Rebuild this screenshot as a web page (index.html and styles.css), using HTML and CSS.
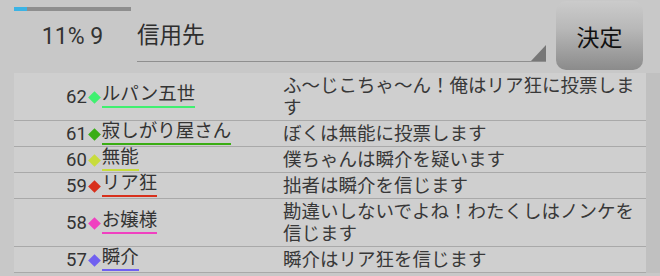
FILE: index.html
```html
<!DOCTYPE html>
<html lang="ja">
<head>
    <meta charset="UTF-8">
    <meta name="viewport" content="width=device-width, initial-scale=1.0">
    <title>投票</title>
    <link rel="stylesheet" href="styles.css">
</head>
<body>
    <div class="top">
        <div class="status">
            <div class="progress"><div class="progress-fill"></div></div>
            <div class="count">11% 9</div>
        </div>
        <div class="picker">信用先</div>
        <div class="decide">決定</div>
    </div>
    <div class="list">
        <div class="rows">
            <div class="row">
                <div class="who"><span class="num">62</span><span class="mark c62"></span><span class="name c62">ルパン五世</span></div>
                <div class="msg">ふ～じこちゃ～ん！俺はリア狂に投票します</div>
            </div>
            <div class="row">
                <div class="who"><span class="num">61</span><span class="mark c61"></span><span class="name c61">寂しがり屋さん</span></div>
                <div class="msg">ぼくは無能に投票します</div>
            </div>
            <div class="row">
                <div class="who"><span class="num">60</span><span class="mark c60"></span><span class="name c60">無能</span></div>
                <div class="msg">僕ちゃんは瞬介を疑います</div>
            </div>
            <div class="row">
                <div class="who"><span class="num">59</span><span class="mark c59"></span><span class="name c59">リア狂</span></div>
                <div class="msg">拙者は瞬介を信じます</div>
            </div>
            <div class="row">
                <div class="who"><span class="num">58</span><span class="mark c58"></span><span class="name c58">お嬢様</span></div>
                <div class="msg">勘違いしないでよね！わたくしはノンケを信じます</div>
            </div>
            <div class="row">
                <div class="who"><span class="num">57</span><span class="mark c57"></span><span class="name c57">瞬介</span></div>
                <div class="msg">瞬介はリア狂を信じます</div>
            </div>
        </div>
        <div class="track"></div>
    </div>
</body>
</html>
```

FILE: styles.css
```css
body {
    margin: 0;
    background-color: #c8c8c8;
    font-family: Roboto, "Noto Sans CJK JP", sans-serif;
    color: #333;
}
.top {
    display: flex;
    height: 73px;
}
.status {
    width: 117px;
    margin-left: 14px;
}
.progress {
    margin-top: 7px;
    height: 4px;
    background-color: #8e8e8e;
}
.progress-fill {
    width: 13px;
    height: 100%;
    background-color: #3bb3e4;
}
.count {
    margin-top: 12px;
    font-size: 23px;
    line-height: 27px;
    text-align: center;
}
.picker {
    display: flex;
    align-items: center;
    margin-left: 6px;
    width: 409px;
    height: 57px;
    padding-top: 4px;
    border-bottom: 1px solid #8f8f8f;
    font-size: 22.5px;
    color: #2e2e2e;
}
.picker::after {
    content: "";
    margin-left: auto;
    align-self: flex-end;
    width: 15px;
    height: 16px;
    background-color: #777;
    clip-path: polygon(100% 0, 100% 100%, 0 100%);
}
.decide {
    display: flex;
    align-items: center;
    justify-content: center;
    margin: 1px 0 0 10px;
    width: 87px;
    height: 69px;
    border-radius: 10px;
    background: linear-gradient(#cbcbcb, #b8b8b8 40%, #8b8b8b);
    font-size: 23px;
    color: #111;
}
.list {
    display: flex;
}
.rows {
    margin-left: 14px;
    width: 632px;
    background-color: #cfcfcf;
}
.track {
    flex: 1;
    background-color: #c0c0c0;
}
.row {
    display: grid;
    grid-template-columns: 269px 1fr;
    padding: 2px 0 1px;
    border-bottom: 1px solid #a9a9a9;
    font-size: 18.5px;
    line-height: 22px;
}
.who {
    display: flex;
    align-items: center;
    padding-left: 52px;
}
.num {
    font-size: 18.5px;
}
.mark {
    width: 9px;
    height: 9px;
    margin: 0 3px 0 3px;
    transform: rotate(45deg);
    background-color: currentColor;
}
.name {
    line-height: 17px;
    padding-bottom: 3px;
    border-bottom: 2px solid currentColor;
}
.name.c62, .name.c61, .name.c60, .name.c59, .name.c58, .name.c57 {
    color: #333;
}
.c62 { color: #40f070; border-color: #40f070; }
.c61 { color: #3aad14; border-color: #3aad14; }
.c60 { color: #c8dc3c; border-color: #c8dc3c; }
.c59 { color: #d8301c; border-color: #d8301c; }
.c58 { color: #f040c0; border-color: #f040c0; }
.c57 { color: #7060f0; border-color: #7060f0; }
.msg {
    color: #383838;
}
```
